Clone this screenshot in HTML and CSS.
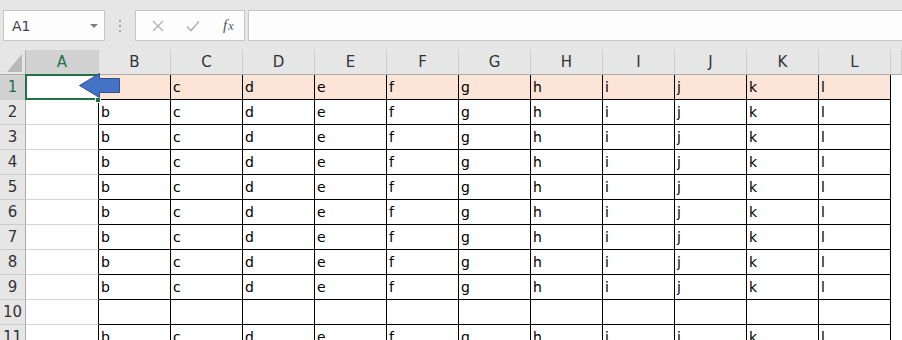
FILE: index.html
```html
<!DOCTYPE html>
<html lang="en">
  <head>
    <meta charset="UTF-8" />
    <meta name="viewport" content="width=device-width, initial-scale=1.0" />
    <title>Sheet1</title>
    <link rel="stylesheet" href="styles.css">
  </head>
  <body>
    <div class="formula-bar">
      <div class="name-box">
        <span>A1</span>
        <span class="caret"></span>
      </div>
      <div class="grip">
        <svg width="3" height="12" viewBox="0 0 3 12">
          <rect x="0" y="0" width="2" height="2" fill="#a6a6a6" />
          <rect x="0" y="5" width="2" height="2" fill="#a6a6a6" />
          <rect x="0" y="10" width="2" height="2" fill="#a6a6a6" />
        </svg>
      </div>
      <div class="fx-buttons">
        <span class="fx-btn">
          <svg width="12" height="12" viewBox="0 0 12 12">
            <path d="M1 1 L11 11 M11 1 L1 11" stroke="#b3b3b3" stroke-width="1.4" fill="none" />
          </svg>
        </span>
        <span class="fx-btn">
          <svg width="14" height="12" viewBox="0 0 14 12">
            <path d="M1 6.5 L5 10.5 L13 1.5" stroke="#b3b3b3" stroke-width="1.6" fill="none" />
          </svg>
        </span>
        <span class="fx-btn fx-label"><span>f</span><span class="fx-x">x</span></span>
      </div>
      <div class="formula-input"></div>
    </div>

    <div class="sheet">
      <div class="cell corner"><div class="corner-mark"></div></div>
      <div class="cell col-head is-active">A</div>
      <div class="cell col-head">B</div>
      <div class="cell col-head">C</div>
      <div class="cell col-head">D</div>
      <div class="cell col-head">E</div>
      <div class="cell col-head">F</div>
      <div class="cell col-head">G</div>
      <div class="cell col-head">H</div>
      <div class="cell col-head">I</div>
      <div class="cell col-head">J</div>
      <div class="cell col-head">K</div>
      <div class="cell col-head">L</div>
      <div class="cell col-head"></div>

      <div class="cell row-head is-active">1</div>
      <div class="cell col-a selected"><div class="selection"></div><div class="fill-handle"></div></div>
      <div class="cell data peach">b</div><div class="cell data peach">c</div><div class="cell data peach">d</div><div class="cell data peach">e</div><div class="cell data peach">f</div><div class="cell data peach">g</div><div class="cell data peach">h</div><div class="cell data peach">i</div><div class="cell data peach">j</div><div class="cell data peach">k</div><div class="cell data peach">l</div>
      <div class="cell col-m"></div>

      <div class="cell row-head">2</div><div class="cell col-a"></div>
      <div class="cell data">b</div><div class="cell data">c</div><div class="cell data">d</div><div class="cell data">e</div><div class="cell data">f</div><div class="cell data">g</div><div class="cell data">h</div><div class="cell data">i</div><div class="cell data">j</div><div class="cell data">k</div><div class="cell data">l</div>
      <div class="cell col-m"></div>

      <div class="cell row-head">3</div><div class="cell col-a"></div>
      <div class="cell data">b</div><div class="cell data">c</div><div class="cell data">d</div><div class="cell data">e</div><div class="cell data">f</div><div class="cell data">g</div><div class="cell data">h</div><div class="cell data">i</div><div class="cell data">j</div><div class="cell data">k</div><div class="cell data">l</div>
      <div class="cell col-m"></div>

      <div class="cell row-head">4</div><div class="cell col-a"></div>
      <div class="cell data">b</div><div class="cell data">c</div><div class="cell data">d</div><div class="cell data">e</div><div class="cell data">f</div><div class="cell data">g</div><div class="cell data">h</div><div class="cell data">i</div><div class="cell data">j</div><div class="cell data">k</div><div class="cell data">l</div>
      <div class="cell col-m"></div>

      <div class="cell row-head">5</div><div class="cell col-a"></div>
      <div class="cell data">b</div><div class="cell data">c</div><div class="cell data">d</div><div class="cell data">e</div><div class="cell data">f</div><div class="cell data">g</div><div class="cell data">h</div><div class="cell data">i</div><div class="cell data">j</div><div class="cell data">k</div><div class="cell data">l</div>
      <div class="cell col-m"></div>

      <div class="cell row-head">6</div><div class="cell col-a"></div>
      <div class="cell data">b</div><div class="cell data">c</div><div class="cell data">d</div><div class="cell data">e</div><div class="cell data">f</div><div class="cell data">g</div><div class="cell data">h</div><div class="cell data">i</div><div class="cell data">j</div><div class="cell data">k</div><div class="cell data">l</div>
      <div class="cell col-m"></div>

      <div class="cell row-head">7</div><div class="cell col-a"></div>
      <div class="cell data">b</div><div class="cell data">c</div><div class="cell data">d</div><div class="cell data">e</div><div class="cell data">f</div><div class="cell data">g</div><div class="cell data">h</div><div class="cell data">i</div><div class="cell data">j</div><div class="cell data">k</div><div class="cell data">l</div>
      <div class="cell col-m"></div>

      <div class="cell row-head">8</div><div class="cell col-a"></div>
      <div class="cell data">b</div><div class="cell data">c</div><div class="cell data">d</div><div class="cell data">e</div><div class="cell data">f</div><div class="cell data">g</div><div class="cell data">h</div><div class="cell data">i</div><div class="cell data">j</div><div class="cell data">k</div><div class="cell data">l</div>
      <div class="cell col-m"></div>

      <div class="cell row-head">9</div><div class="cell col-a"></div>
      <div class="cell data">b</div><div class="cell data">c</div><div class="cell data">d</div><div class="cell data">e</div><div class="cell data">f</div><div class="cell data">g</div><div class="cell data">h</div><div class="cell data">i</div><div class="cell data">j</div><div class="cell data">k</div><div class="cell data">l</div>
      <div class="cell col-m"></div>

      <div class="cell row-head">10</div><div class="cell col-a"></div>
      <div class="cell data"></div><div class="cell data"></div><div class="cell data"></div><div class="cell data"></div><div class="cell data"></div><div class="cell data"></div><div class="cell data"></div><div class="cell data"></div><div class="cell data"></div><div class="cell data"></div><div class="cell data"></div>
      <div class="cell col-m"></div>

      <div class="cell row-head">11</div><div class="cell col-a"></div>
      <div class="cell data">b</div><div class="cell data">c</div><div class="cell data">d</div><div class="cell data">e</div><div class="cell data">f</div><div class="cell data">g</div><div class="cell data">h</div><div class="cell data">i</div><div class="cell data">j</div><div class="cell data">k</div><div class="cell data">l</div>
      <div class="cell col-m"></div>

      <!-- callout arrow pointing at A1 -->
      <svg class="callout" width="44" height="28" viewBox="0 0 44 28">
        <path d="M1.5 13.5 L21.5 1.5 L21.5 6.5 L41.5 6.5 L41.5 20.5 L21.5 20.5 L21.5 25.5 Z" fill="#4472c4" stroke="#2f528f" stroke-width="1" />
      </svg>
    </div>
  </body>
</html>
```

FILE: styles.css
```css
body {
  margin: 0;
  font-family: "DejaVu Sans", sans-serif;
  background-color: #ffffff;
  overflow: hidden;
}

.formula-bar {
  display: flex;
  align-items: flex-start;
  height: 50px;
  padding: 10px 0 0 3px;
  box-sizing: border-box;
  background-color: #e6e6e6;
}

.name-box {
  width: 102px;
  height: 31px;
  box-sizing: border-box;
  border: 1px solid #c6c6c6;
  background-color: #fdfdfd;
  display: flex;
  align-items: center;
  justify-content: space-between;
  padding: 0 6px 0 8px;
  font-size: 14px;
  color: #444;
}

.caret {
  width: 0;
  height: 0;
  border-left: 4px solid transparent;
  border-right: 4px solid transparent;
  border-top: 4px solid #7f7f7f;
}

.grip {
  width: 30px;
  display: flex;
  justify-content: center;
  padding-top: 10px;
}

.fx-buttons {
  width: 110px;
  height: 31px;
  box-sizing: border-box;
  border: 1px solid #c6c6c6;
  background-color: #fdfdfd;
  display: flex;
  align-items: center;
  padding-left: 6px;
  gap: 4px;
}

.fx-btn {
  width: 34px;
  display: flex;
  justify-content: center;
  align-items: baseline;
}

.fx-label {
  font-family: "Liberation Serif", serif;
  font-style: italic;
  font-size: 15px;
  color: #555;
}

.fx-x {
  font-size: 12px;
  margin-left: 1px;
}

.formula-input {
  flex: 1;
  margin-left: 3px;
  height: 31px;
  box-sizing: border-box;
  border: 1px solid #c6c6c6;
  border-right: 0;
  background-color: #fdfdfd;
}

.sheet {
  position: relative;
  display: grid;
  grid-template-columns: 26px 73px repeat(11, 72px) 1fr;
  grid-auto-rows: 25px;
}

.cell {
  box-sizing: border-box;
  border-right: 1px solid #000;
  border-bottom: 1px solid #000;
  padding-left: 2px;
  font-size: 14px;
  line-height: 24px;
  color: #000;
  white-space: nowrap;
  overflow: hidden;
}

.corner {
  background-color: #e6e6e6;
  border-right-color: #ababab;
  border-bottom-color: #ababab;
  display: flex;
  justify-content: flex-end;
  align-items: flex-end;
  padding: 0 3px 2px 0;
}

.corner-mark {
  width: 15px;
  height: 18px;
  background-color: #b9b9b9;
  clip-path: polygon(100% 0, 100% 100%, 0 100%);
}

.col-head {
  background-color: #e6e6e6;
  border-right-color: #cdcdcd;
  border-bottom-color: #ababab;
  padding-left: 0;
  text-align: center;
  font-size: 15px;
  color: #333;
}

.row-head {
  background-color: #e6e6e6;
  border-right-color: #ababab;
  border-bottom-color: #cdcdcd;
  padding-left: 0;
  text-align: center;
  font-size: 15px;
  color: #333;
}

.is-active {
  background-color: #d2d2d2;
  color: #217346;
}

.col-a {
  border-bottom-color: #d4d4d4;
}

.col-m {
  border-color: transparent;
}

.peach {
  background-color: #fce4d6;
}

.selected {
  position: relative;
  overflow: visible;
}

.selection {
  position: absolute;
  left: -1px;
  top: -1px;
  width: 74px;
  height: 26px;
  box-sizing: border-box;
  border: 2px solid #217346;
}

.fill-handle {
  position: absolute;
  left: 69px;
  top: 22px;
  width: 6px;
  height: 6px;
  box-sizing: border-box;
  background-color: #217346;
  border: 1px solid #fff;
}

.callout {
  position: absolute;
  left: 78px;
  top: 22px;
}
```
